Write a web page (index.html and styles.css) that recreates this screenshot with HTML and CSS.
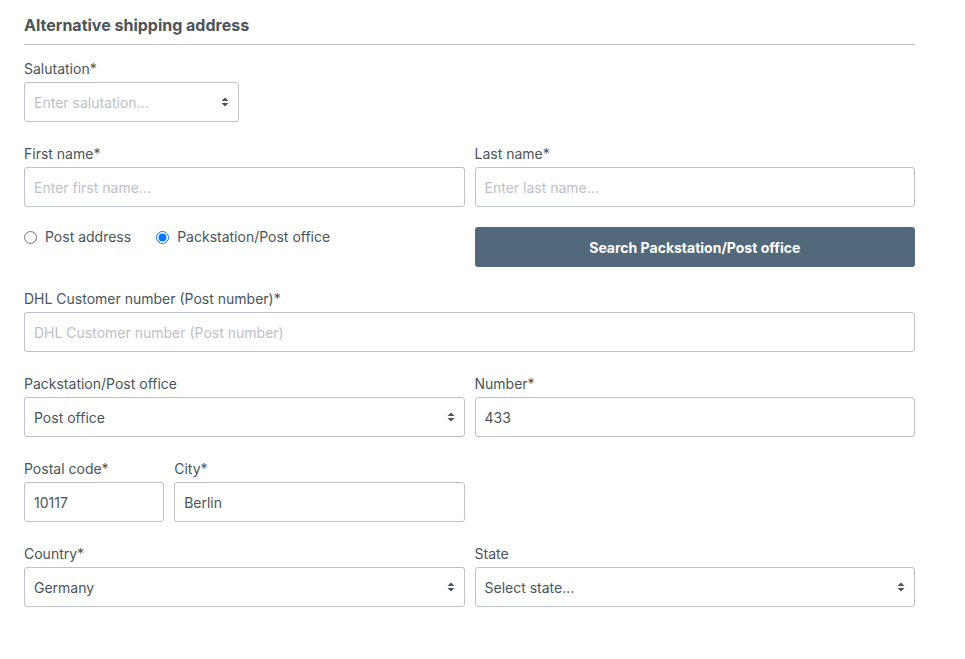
FILE: index.html
```html
<!DOCTYPE html>
<html lang="en">
<head>
<meta charset="utf-8">
<title>Alternative shipping address</title>
<link rel="stylesheet" href="styles.css">
</head>
<body>
<div class="page">
  <h2 class="card-title">Alternative shipping address</h2>

  <div class="grid">
    <div class="field span-3">
      <label class="label">Salutation*</label>
      <div class="select-wrap">
        <div class="control placeholder">Enter salutation...</div>
        <svg class="arrows" width="8" height="10" viewBox="0 0 8 10"><path d="M4 0.5L7.5 4H0.5Z M4 9.5L7.5 6H0.5Z" fill="#4a545b"/></svg>
      </div>
    </div>
  </div>

  <div class="grid">
    <div class="field span-6">
      <label class="label">First name*</label>
      <div class="control placeholder">Enter first name...</div>
    </div>
    <div class="field span-6">
      <label class="label">Last name*</label>
      <div class="control placeholder">Enter last name...</div>
    </div>
  </div>

  <div class="grid options-row">
    <div class="field span-6 radios">
      <label class="radio"><input type="radio" name="type"> Post address</label>
      <label class="radio"><input type="radio" name="type" checked> Packstation/Post office</label>
    </div>
    <div class="field span-6">
      <button class="btn">Search Packstation/Post office</button>
    </div>
  </div>

  <div class="grid">
    <div class="field span-12">
      <label class="label">DHL Customer number (Post number)*</label>
      <div class="control placeholder">DHL Customer number (Post number)</div>
    </div>
  </div>

  <div class="grid">
    <div class="field span-6">
      <label class="label">Packstation/Post office</label>
      <div class="select-wrap">
        <div class="control">Post office</div>
        <svg class="arrows" width="8" height="10" viewBox="0 0 8 10"><path d="M4 0.5L7.5 4H0.5Z M4 9.5L7.5 6H0.5Z" fill="#4a545b"/></svg>
      </div>
    </div>
    <div class="field span-6">
      <label class="label">Number*</label>
      <div class="control">433</div>
    </div>
  </div>

  <div class="grid">
    <div class="field span-2">
      <label class="label">Postal code*</label>
      <div class="control">10117</div>
    </div>
    <div class="field span-4">
      <label class="label">City*</label>
      <div class="control">Berlin</div>
    </div>
  </div>

  <div class="grid">
    <div class="field span-6">
      <label class="label">Country*</label>
      <div class="select-wrap">
        <div class="control">Germany</div>
        <svg class="arrows" width="8" height="10" viewBox="0 0 8 10"><path d="M4 0.5L7.5 4H0.5Z M4 9.5L7.5 6H0.5Z" fill="#4a545b"/></svg>
      </div>
    </div>
    <div class="field span-6">
      <label class="label">State</label>
      <div class="select-wrap">
        <div class="control">Select state...</div>
        <svg class="arrows" width="8" height="10" viewBox="0 0 8 10"><path d="M4 0.5L7.5 4H0.5Z M4 9.5L7.5 6H0.5Z" fill="#4a545b"/></svg>
      </div>
    </div>
  </div>
</div>
</body>
</html>
```

FILE: styles.css
```css
* { box-sizing: border-box; }

html, body {
  margin: 0;
  background: #fff;
}

body {
  font-family: Inter, "Noto Sans", "Liberation Sans", sans-serif;
  font-size: 14px;
  color: #4a545b;
}

.page {
  width: 891px;
  margin-left: 24px;
}

.card-title {
  margin: 0 0 14px;
  padding-top: 13px;
  padding-bottom: 7px;
  font-size: 16px;
  line-height: 24px;
  font-weight: 700;
  color: #4a545b;
  border-bottom: 1px solid #bcc1c7;
}

.grid {
  display: grid;
  grid-template-columns: repeat(12, 1fr);
  column-gap: 10px;
}

.field {
  margin-bottom: 22px;
}

.options-row {
  margin-top: -2px;
}

.span-2 { grid-column: span 2; }
.span-3 { grid-column: span 3; }
.span-4 { grid-column: span 4; }
.span-6 { grid-column: span 6; }
.span-12 { grid-column: span 12; }

.label {
  display: block;
  line-height: 20px;
  margin-bottom: 3px;
}

.control {
  height: 40px;
  border: 1px solid #bcc1c7;
  border-radius: 3px;
  padding: 0 10px 0 9px;
  display: flex;
  align-items: center;
  background: #fff;
  color: #4a545b;
}

.control.placeholder {
  color: #bcc1c7;
}

.select-wrap {
  position: relative;
}

.arrows {
  position: absolute;
  right: 10px;
  top: 15px;
}

.radios {
  display: flex;
  align-items: flex-start;
  gap: 25px;
}

.radio {
  display: flex;
  align-items: center;
  line-height: 20px;
  gap: 8px;
}

.radio input {
  margin: 0;
  width: 13px;
  height: 13px;
}

.btn {
  display: block;
  width: 100%;
  height: 40px;
  border: 0;
  border-radius: 3px;
  background: #52687b;
  color: #fff;
  font-family: inherit;
  font-size: 14px;
  font-weight: 700;
}
```
